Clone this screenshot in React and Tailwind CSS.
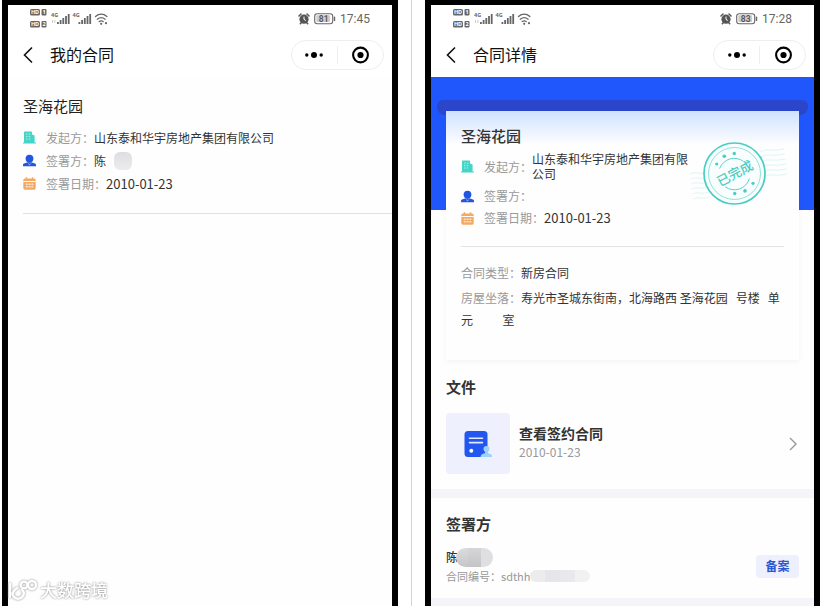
import React from 'react';

const SignalIcons = () => (
  <svg viewBox="0 0 80 22" className="w-20 h-[22px]" fill="#666" aria-hidden="true">
    {[0, 12].map((y, i) => (
      <g key={y}>
        <rect x="1" y={1 + y} width="10" height="6.5" rx="1.5" />
        <rect x="12.5" y={1 + y} width="5" height="6.5" rx="1" />
        <text x="6" y={6.2 + y} fontSize="5.5" fontWeight="700" fill="#fff" textAnchor="middle" className="font-sans">HD</text>
        <text x="15" y={6.2 + y} fontSize="5.5" fontWeight="700" fill="#fff" textAnchor="middle" className="font-sans">{i + 1}</text>
      </g>
    ))}
    {[0, 21.5].map((x) => (
      <g key={x}>
        <text x={22 + x} y="9" fontSize="5.5" fontWeight="700" className="font-sans">4G</text>
        <rect x={28 + x} y="14" width="1.8" height="2" />
        <rect x={30.7 + x} y="12" width="1.8" height="4" />
        <rect x={33.4 + x} y="10" width="1.8" height="6" />
        <rect x={36.1 + x} y="8" width="1.8" height="8" />
        <rect x={38.8 + x} y="6" width="1.8" height="10" />
      </g>
    ))}
    <path d="M23.5 12v3M25.8 12v3" stroke="#ccc" strokeWidth="1" />
    <g fill="none" stroke="#666" strokeWidth="1.3" strokeLinecap="round">
      <path d="M66.5 8.5c3.4-3 8-3 11.4 0" />
      <path d="M68.3 11.2c2.4-2 5.4-2 7.8 0" />
      <path d="M70.2 13.6c1.3-1 2.7-1 4 0" />
    </g>
    <circle cx="72.2" cy="15.8" r="1.1" />
    <circle cx="77" cy="15.2" r="1.1" />
  </svg>
);

const AlarmIcon = () => (
  <svg viewBox="0 0 12 12" className="size-3" aria-hidden="true">
    <path d="M1 3 3 1M11 3 9 1M2.3 10.8l1.2-1.3M9.7 10.8 8.5 9.5" stroke="#555" strokeWidth="1.5" strokeLinecap="round" />
    <circle cx="6" cy="6.2" r="4.6" fill="#555" />
    <path d="M6 3.6v2.8l1.8 1.1" fill="none" stroke="#fff" strokeWidth="1" />
  </svg>
);

const Battery = ({ level }) => (
  <svg viewBox="0 0 22 12" className="w-[22px] h-3" role="img" aria-label={`${level}%`}>
    <rect x="0.7" y="0.7" width="18" height="10" rx="2.5" fill="#fff" stroke="#666" strokeWidth="1.1" />
    <rect x="2.3" y="2.3" width="13.8" height="6.8" rx="1" fill="#ccc" />
    <rect x="19.8" y="3.5" width="1.4" height="4.5" rx="0.6" fill="#666" />
    <text x="9.7" y="8.8" fontSize="8.5" fontWeight="600" fill="#555" textAnchor="middle" className="font-['Roboto',sans-serif]">{level}</text>
  </svg>
);

const PhoneHeader = ({ title, battery, time }) => (
  <header className="bg-white">
    <div className="h-7 pl-[21px] pr-[22px] flex items-center justify-between">
      <SignalIcons />
      <div className="flex items-center gap-1 text-[#666]">
        <AlarmIcon />
        <Battery level={battery} />
        <span className="text-[12px] leading-none font-['Roboto',sans-serif]">{time}</span>
      </div>
    </div>
    <div className="h-11 pl-3.5 pr-2 flex items-center">
      <button type="button" aria-label="返回" className="mr-3">
        <svg viewBox="0 0 16 18" className="w-4 h-[18px]" fill="none" stroke="#111" strokeWidth="1.6">
          <path d="M10 1.5 2.5 9l7.5 7.5" />
        </svg>
      </button>
      <h1 className="pb-0.5 text-[16px] leading-6 text-[#111]">{title}</h1>
      <div className="ml-auto w-[93px] h-[30px] border border-[#eee] rounded-full flex items-center">
        <button type="button" aria-label="更多" className="flex-1 flex justify-center">
          <svg viewBox="0 0 20 8" className="w-5 h-2" fill="#000">
            <circle cx="2.8" cy="4" r="1.7" />
            <circle cx="10" cy="4" r="3" />
            <circle cx="17.2" cy="4" r="1.7" />
          </svg>
        </button>
        <span className="w-px h-[18px] bg-[#eee]"></span>
        <button type="button" aria-label="关闭" className="flex-1 flex justify-center">
          <svg viewBox="0 0 18 18" className="size-[18px]">
            <circle cx="9.5" cy="9" r="7.4" fill="none" stroke="#000" strokeWidth="2.1" />
            <circle cx="9.5" cy="9" r="3.1" />
          </svg>
        </button>
      </div>
    </div>
  </header>
);

const BuildingIcon = () => (
  <svg viewBox="0 0 13 13" className="size-[13px] shrink-0" aria-hidden="true">
    <path d="M1 1.2Q1 .5 1.8.5h6.4q.8 0 .8.7v2.3l2.6 1v7H13v1H0v-1h1z" fill="#45d5c6" />
    <path d="M3 3.2h1.5M5.8 3.2h1.5M3 5.6h1.5M5.8 5.6h1.5M3 8h1.5M5.8 8h1.5" stroke="#fff" strokeWidth="1" opacity=".6" />
  </svg>
);

const PersonIcon = () => (
  <svg viewBox="0 0 13 13" className="size-[13px] shrink-0" fill="#2356e0" aria-hidden="true">
    <circle cx="6.5" cy="4.6" r="3.9" />
    <path d="M0 12.3V11q0-1 1-1.4l3.7-1.4h3.6L12 9.6q1 .4 1 1.4v1.3z" />
    <path d="m5.2 9.6 1.3 1.3 1.3-1.3" stroke="#fff" strokeWidth=".6" fill="none" />
  </svg>
);

const CalendarIcon = () => (
  <svg viewBox="0 0 13 13" className="size-[13px] shrink-0" aria-hidden="true">
    <rect x="0.3" y="1.4" width="12.4" height="11.3" rx="1.6" fill="#f2a964" />
    <path d="M3.5.2v2.6M9.5.2v2.6" stroke="#f2a964" strokeWidth="1.5" />
    <path d="M.3 4.5h12.4M2.8 7.2h2M5.6 7.2h2M8.4 7.2h2M2.8 9.8h2M5.6 9.8h2M8.4 9.8h2" stroke="#fff" strokeWidth="1" />
  </svg>
);

const InfoRow = ({ icon, label, className = 'h-[23px]', children }) => (
  <div className={`flex items-center text-[12px] ${className}`}>
    {icon}
    <dt className="ml-2.5 shrink-0 text-[#999]">{label}：</dt>
    <dd className="flex items-center text-[#333]">{children}</dd>
  </div>
);

const Stamp = () => (
  <svg viewBox="0 0 100 70" className="w-[100px] h-[70px] shrink-0 -mr-[5px]" role="img" aria-label="已完成">
    <g fill="none" stroke="#45d0c8" strokeWidth="0.6" opacity=".3">
      {[0, 5, 10, 15, 20, 25].map((d) => (
        <path key={d} d={`M${1 + d / 8} ${32 + d}q4-2 8-1t8-1`} />
      ))}
      {[0, 5, 10, 15, 20, 25].map((d) => (
        <path key={d} d={`M${71 + d / 8} ${10 + d}q5-3 10-2t14-1`} />
      ))}
    </g>
    <g fill="none" stroke="#4ccdc3">
      <circle cx="45.5" cy="31.5" r="30.5" strokeWidth="1.7" fill="#f7fefd" />
      <circle cx="45.5" cy="31.5" r="26" strokeWidth=".6" />
      <path d="M30.6 26.5a15.6 15.6 0 0 1 24-7" strokeWidth=".9" />
      <path d="M60.4 36.5a15.6 15.6 0 0 1-24.2 8.3" strokeWidth=".9" />
    </g>
    <g fill="#4ccdc3">
      <circle cx="27.7" cy="22" r="1.6" />
      <circle cx="35.3" cy="14.3" r="1.8" />
      <circle cx="45.3" cy="11.5" r="1.7" />
      <circle cx="45.7" cy="51.5" r="1.7" />
      <circle cx="56" cy="48.9" r="1.8" />
      <circle cx="64" cy="41.3" r="1.6" />
      <text x="46" y="36" fontSize="13" fontWeight="500" textAnchor="middle" transform="rotate(-28 46 31.5)">已完成</text>
    </g>
  </svg>
);

const ContractThumb = () => (
  <div className="w-16 h-[61px] shrink-0 rounded-sm bg-[#eff0fe] flex items-center justify-center">
    <svg viewBox="0 0 28 28" className="size-7" aria-hidden="true">
      <rect x="0.5" y="1" width="23" height="26" rx="3.5" fill="#2356ee" />
      <path d="M5.5 8.3h13M5.5 12.6h13" stroke="#dfe9ff" strokeWidth="1.6" strokeLinecap="round" />
      <circle cx="7.3" cy="20.8" r="2" fill="#fff" />
      <circle cx="22.5" cy="19" r="3" fill="#9fd2fb" />
      <path d="M16.5 27q0-3 4.5-3.8v-2h3v2q4.5.8 4.5 3.8z" fill="#9fd2fb" />
    </svg>
  </div>
);

const Watermark = () => (
  <div className="mt-auto mb-1 flex items-center gap-0.5 text-white drop-shadow-[0_0_1px_#888]">
    <svg viewBox="0 0 30 22" className="w-[30px] h-[22px]" fill="none" stroke="#fff" strokeWidth="2.4" strokeLinecap="round" aria-hidden="true">
      <path d="M2 5v13M9 9q-7 5-3 9 5 4 9-1 2-4-1-6" />
      <circle cx="16" cy="6" r="3.4" />
      <circle cx="24" cy="6" r="4" />
    </svg>
    <span className="text-[17px] leading-6 font-medium">大数跨境</span>
  </div>
);

const phoneClass = 'min-w-0 flex flex-col border-black border-x-[6px] border-t-[5px] bg-[#fefefe]';

const ContractList = () => (
  <section className={`flex-[396] ${phoneClass}`}>
    <PhoneHeader title="我的合同" battery="81" time="17:45" />
    <article className="ml-[15px] pt-[17px] pb-[18px] border-b border-[#e2e2e2]">
      <h2 className="text-[15px] leading-6 text-[#222]">圣海花园</h2>
      <dl className="mt-2">
        <InfoRow icon={<BuildingIcon />} label="发起方">山东泰和华宇房地产集团有限公司</InfoRow>
        <InfoRow icon={<PersonIcon />} label="签署方">
          陈
          <span className="ml-2 w-[18px] h-[18px] rounded-md bg-linear-to-b from-[#dedee0] to-[#ececee]"></span>
        </InfoRow>
        <InfoRow icon={<CalendarIcon />} label="签署日期">
          <span className="text-[13px]">2010-01-23</span>
        </InfoRow>
      </dl>
    </article>
    <Watermark />
  </section>
);

const ContractDetail = () => (
  <section className={`flex-[395] ${phoneClass}`}>
    <PhoneHeader title="合同详情" battery="83" time="17:28" />
    <main className="flex-1 flex flex-col">
      <div className="pt-[23px] bg-[linear-gradient(#1f57fc_133px,transparent_133px)]">
        <div className="mx-1.5 h-[15px] rounded-t-md rounded-b-lg bg-[#2b46cb]"></div>
        <article className="-mt-1 mx-[15px] px-[15px] pt-[13px] pb-[29px] bg-[linear-gradient(#cfe2ff,#fefefe_34px)] shadow-[0_2px_5px_rgba(80,80,160,0.06)]">
          <div className="flex items-center justify-between">
            <div className="min-w-0">
              <h2 className="text-[15px] leading-6 font-medium text-[#333]">圣海花园</h2>
              <dl className="mt-[3px]">
                <InfoRow icon={<BuildingIcon />} label="发起方" className="mb-1 leading-[15px]">
                  山东泰和华宇房地产集团有限公司
                </InfoRow>
                <InfoRow icon={<PersonIcon />} label="签署方" className="h-[22px]" />
                <InfoRow icon={<CalendarIcon />} label="签署日期" className="h-[22px]">
                  <span className="text-[13px]">2010-01-23</span>
                </InfoRow>
              </dl>
            </div>
            <Stamp />
          </div>
          <hr className="mt-[17px] border-[#e4e4e4]" />
          <div className="mt-[15px] text-[12px] leading-[22px] text-[#333]">
            <p><span className="text-[#999]">合同类型：</span>新房合同</p>
            <p className="mt-[3px] whitespace-pre-wrap">
              <span className="text-[#999]">房屋坐落：</span>
              <span>{'寿光市圣城东街南，北海路西 圣海花园   号楼   单'}</span>
            </p>
            <p className="whitespace-pre-wrap">{'元           室'}</p>
          </div>
        </article>
      </div>

      <section className="px-[15px] pt-[15px] pb-[15px] border-b-[9px] border-[#f5f5f9]">
        <h2 className="text-[15px] leading-6 font-bold text-[#333]">文件</h2>
        <a href="#contract" className="mt-3.5 flex items-center">
          <ContractThumb />
          <div className="ml-[9px] pb-[3px]">
            <p className="text-[14px] leading-5 font-bold text-[#333]">查看签约合同</p>
            <p className="text-[12px] leading-[18px] text-[#999]">2010-01-23</p>
          </div>
          <svg viewBox="0 0 10 16" className="ml-auto w-2.5 h-4" fill="none" stroke="#999" strokeWidth="1.4" aria-hidden="true">
            <path d="m1 2 6 6-6 6" />
          </svg>
        </a>
      </section>

      <section className="px-[15px] pt-3.5 pb-[13px]">
        <h2 className="text-[15px] leading-6 font-bold text-[#333]">签署方</h2>
        <div className="mt-[11px] flex items-center justify-between">
          <div>
            <p className="h-5 flex items-center text-[12px] font-medium text-[#333]">
              陈
              <span className="-ml-0.5 w-[37px] h-[19px] rounded-full overflow-hidden grid grid-cols-3">
                <i className="bg-linear-to-b from-[#dcdcde] to-[#c6c6c8]"></i>
                <i className="bg-linear-to-b from-[#d6d6d8] to-[#c4c4c6]"></i>
                <i className="bg-[#dfdfe1]"></i>
              </span>
            </p>
            <p className="h-[18px] flex items-center text-[11px] text-[#999]">
              合同编号：sdthh
              <span className="w-[60px] h-3 rounded-full overflow-hidden grid grid-cols-4">
                <i className="bg-[#ececee]"></i>
                <i className="bg-[#e6e6e8]"></i>
                <i className="bg-[#e9e9eb]"></i>
                <i className="bg-[#f1f1f3]"></i>
              </span>
            </p>
          </div>
          <button type="button" className="w-[43px] h-[23px] rounded-sm bg-[#eff0fd] text-[12px] font-bold text-[#2a58d0]">
            备案
          </button>
        </div>
      </section>
      <div className="flex-1 min-h-2 bg-[#f5f5f9]"></div>
    </main>
  </section>
);

const App = () => (
  <div className="min-h-screen pl-0.5 pr-px flex gap-[13px] bg-white [font-family:'Noto_Sans_CJK_SC','Liberation_Sans',sans-serif]">
    <ContractList />
    <div className="w-px bg-[#d5d5d8]"></div>
    <ContractDetail />
  </div>
);

export default App;
